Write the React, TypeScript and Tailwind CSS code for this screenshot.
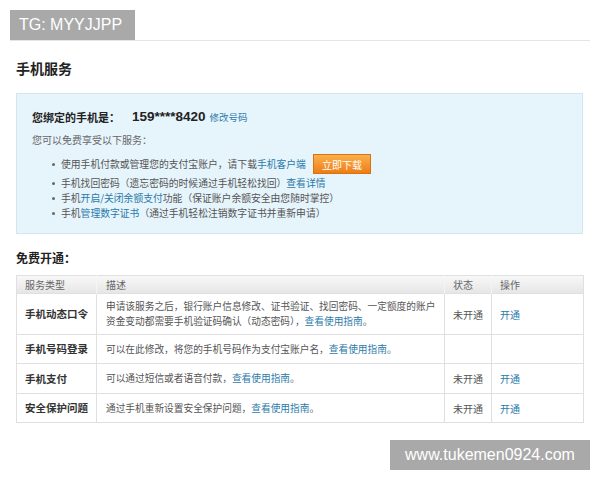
const link = "text-[#2c7aa8]";

const bullets = [
  <>
    使用手机付款或管理您的支付宝账户，请下载<span className={link}>手机客户端</span>
    <span className="ml-[7px] inline-flex h-[20px] w-[58px] items-center justify-center border border-[#d9730f] bg-gradient-to-b from-[#fbb04a] to-[#ee7d12] text-[10px] text-white">
      立即下载
    </span>
  </>,
  <>
    手机找回密码（遗忘密码的时候通过手机轻松找回）<span className={link}>查看详情</span>
  </>,
  <>
    手机<span className={link}>开启/关闭余额支付</span>功能（保证账户余额安全由您随时掌控）
  </>,
  <>
    手机<span className={link}>管理数字证书</span>（通过手机轻松注销数字证书并重新申请）
  </>,
];

const bulletHeights = ["h-[22px]", "h-[16px]", "h-[15px]", "h-[15px]"];

const rows = [
  {
    name: "手机动态口令",
    desc: (
      <>
        申请该服务之后，银行账户信息修改、证书验证、找回密码、一定额度的账户
        <br />
        资金变动都需要手机验证码确认（动态密码），<span className={link}>查看使用指南</span>。
      </>
    ),
    status: "未开通",
    h: "h-[41px]",
  },
  {
    name: "手机号码登录",
    desc: (
      <>
        可以在此修改，将您的手机号码作为支付宝账户名，<span className={link}>查看使用指南</span>。
      </>
    ),
    status: "",
    h: "h-[29px]",
  },
  {
    name: "手机支付",
    desc: (
      <>
        可以通过短信或者语音付款，<span className={link}>查看使用指南</span>。
      </>
    ),
    status: "未开通",
    h: "h-[30px]",
  },
  {
    name: "安全保护问题",
    desc: (
      <>
        通过手机重新设置安全保护问题，<span className={link}>查看使用指南</span>。
      </>
    ),
    status: "未开通",
    h: "h-[29px]",
  },
];

export default function App() {
  return (
    <div className="relative h-[480px] w-[600px] overflow-hidden bg-white font-['Noto_Sans_CJK_SC',sans-serif] text-[#555]">
      <div className="mx-[10px] mt-[40px] border-t border-[#e4e4e4] px-[6px]">
        <h1 className="mt-[17px] text-[14px] font-bold leading-[20px] text-[#222]">手机服务</h1>

        {/* binding info box */}
        <div className="mt-[15px] h-[141px] w-[567px] border border-[#d3e5f1] bg-[#e6f4fc] pl-[15px]">
          <div className="mt-[13px] flex h-[20px] items-center">
            <span className="text-[11px] font-bold text-[#222]">您绑定的手机是：</span>
            <span className="ml-[12px] font-['Liberation_Sans',sans-serif] text-[13.5px] font-bold text-[#222]">159****8420</span>
            <span className={`ml-[4px] text-[9.5px] ${link}`}>修改号码</span>
          </div>
          <div className="mt-[5px] h-[16px] text-[10px] leading-[16px] text-[#666]">您可以免费享受以下服务：</div>
          <ul className="mt-[5px] pl-[20px]">
            {bullets.map((b, i) => (
              <li key={i} className={`flex items-center whitespace-nowrap text-[9.8px] text-[#555] ${bulletHeights[i]}`}>
                <span className="mr-[6px] inline-block h-[3px] w-[3px] rounded-full bg-[#666]" />
                {b}
              </li>
            ))}
          </ul>
        </div>

        <h2 className="mt-[16px] text-[12px] font-bold leading-[16px] text-[#222]">免费开通：</h2>

        {/* service table */}
        <table className="mt-[9px] w-[567px] table-fixed border-collapse border border-[#e0e0e0]">
          <colgroup>
            <col className="w-[80px]" />
            <col className="w-[348px]" />
            <col className="w-[47px]" />
            <col className="w-[92px]" />
          </colgroup>
          <thead>
            <tr className="h-[18px] bg-gradient-to-b from-[#f8f8f8] to-[#e5e5e5] text-left text-[10px] font-normal text-[#666]">
              <th className="border-r border-[#f4f4f4] pl-[8px] font-normal">服务类型</th>
              <th className="border-r border-[#f4f4f4] pl-[9px] font-normal">描述</th>
              <th className="border-r border-[#f4f4f4] pl-[8px] font-normal">状态</th>
              <th className="pl-[8px] font-normal">操作</th>
            </tr>
          </thead>
          <tbody>
            {rows.map((r) => (
              <tr key={r.name} className={`${r.h} border-t border-[#e0e0e0]`}>
                <td className="border-r border-[#e0e0e0] pl-[8px] text-[10.5px] font-bold whitespace-nowrap text-[#333]">{r.name}</td>
                <td className="border-r border-[#e0e0e0] pl-[9px] text-[9.7px] leading-[15px] whitespace-nowrap text-[#555]">{r.desc}</td>
                <td className="border-r border-[#e0e0e0] pl-[8px] text-[10px] text-[#555]">{r.status}</td>
                <td className={`pl-[8px] text-[10px] ${link}`}>{r.status ? "开通" : ""}</td>
              </tr>
            ))}
          </tbody>
        </table>
      </div>

      {/* watermarks */}
      <div className="absolute left-[10px] top-[10px] flex h-[30px] w-[125px] items-center bg-[#a9a9a9] pl-[9px] font-['Liberation_Sans',sans-serif] text-[16px] text-white">
        TG: MYYJJPP
      </div>
      <div className="absolute left-[390px] top-[440px] flex h-[30px] w-[200px] items-center justify-center bg-[#a9a9a9] font-['Liberation_Sans',sans-serif] text-[16px] text-white">
        www.tukemen0924.com
      </div>
    </div>
  );
}
